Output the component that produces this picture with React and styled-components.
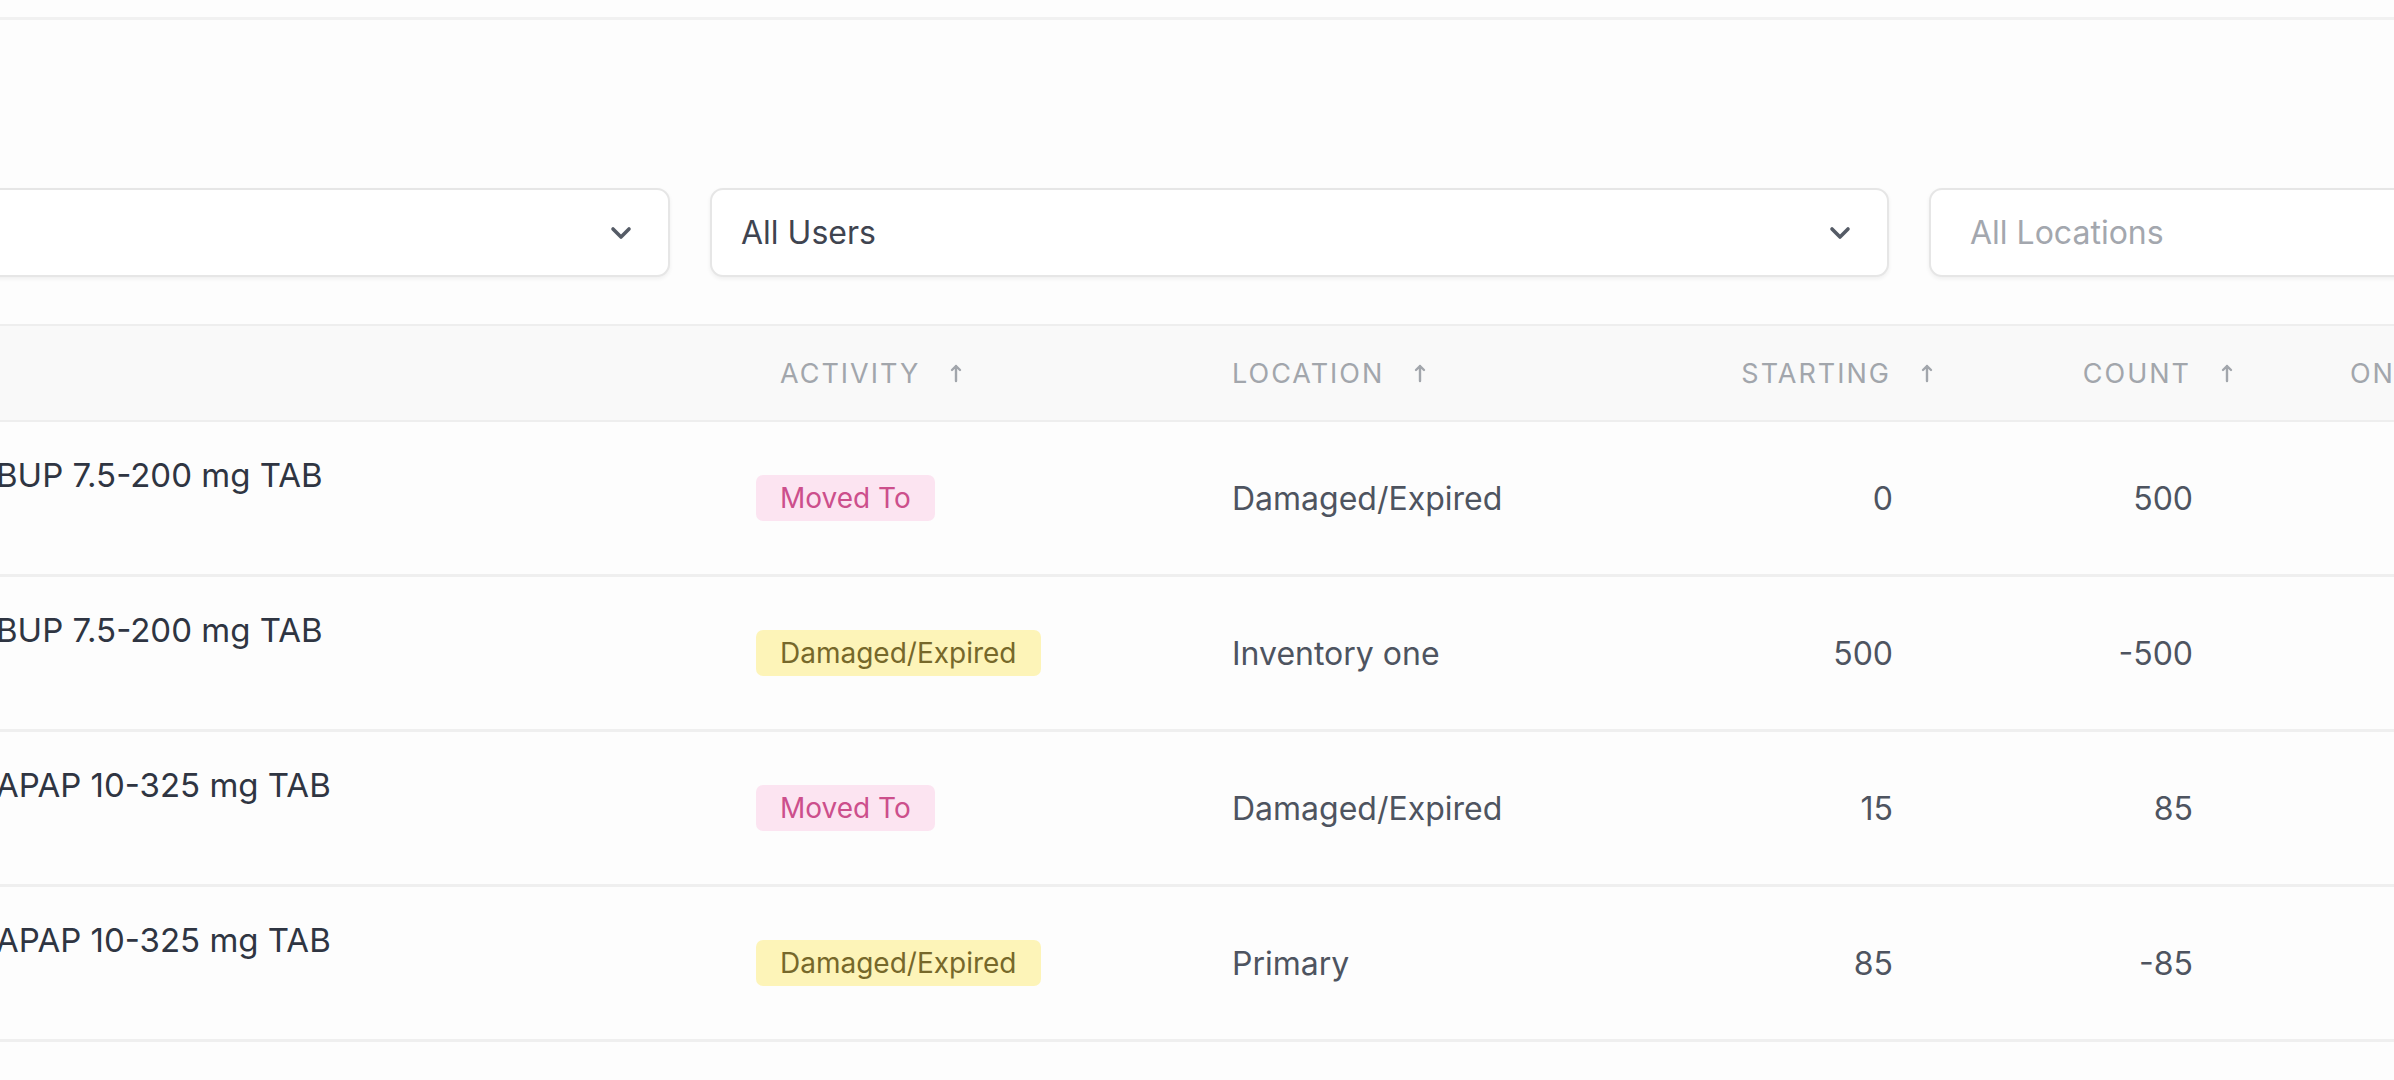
import React from "react";
import styled, { createGlobalStyle } from "styled-components";

const GlobalStyle = createGlobalStyle`
  html, body {
    margin: 0;
    padding: 0;
    background: #fdfdfd;
    overflow: hidden;
  }
  body {
    font-family: Inter, "Noto Sans", "Liberation Sans", sans-serif;
    color: #374151;
  }
`;

const Page = styled.div`
  width: 2394px;
  height: 1080px;
  overflow: hidden;
  background: #fdfdfd;
`;

const TopBar = styled.div`
  height: 17px;
  border-bottom: 3px solid #f1f1f1;
`;

const Content = styled.div`
  margin-left: -509px;
  padding-top: 168px;
  width: 3200px;
`;

const Filters = styled.div`
  display: grid;
  grid-template-columns: 1179px 1179px 1179px;
  gap: 40px;
  margin-bottom: 47px;
`;

const Select = styled.div`
  height: 89px;
  box-sizing: border-box;
  display: flex;
  align-items: center;
  justify-content: space-between;
  padding: 0 36px 0 ${(p) => p.$padLeft || 29}px;
  background: #fff;
  border: 2px solid #e6e6e6;
  border-radius: 13px;
  box-shadow: 0 2px 4px rgba(0, 0, 0, 0.06);
  font-size: 32px;
  color: ${(p) => (p.$placeholder ? "#a3a7ae" : "#3f4450")};
`;

const Chevron = () => (
  <svg width="22" height="14" viewBox="0 0 22 14" fill="none">
    <path d="M3 3l8 8 8-8" stroke="#555b66" strokeWidth="3.6" strokeLinecap="round" strokeLinejoin="round" />
  </svg>
);

const COLS = "483px 782px 452px 409px 300px 300px 300px";

const Table = styled.div`
  display: flex;
  flex-direction: column;
`;

const HeadRow = styled.div`
  display: grid;
  grid-template-columns: ${COLS};
  height: 98px;
  box-sizing: border-box;
  background: #f9f9f9;
  border-top: 2px solid #eeeeee;
  border-bottom: 2px solid #eeeeee;
`;

const HeadCell = styled.div`
  display: flex;
  align-items: center;
  justify-content: ${(p) => (p.$right ? "flex-end" : "flex-start")};
  padding: 0 24px;
  font-size: 27px;
  letter-spacing: 2px;
  text-transform: uppercase;
  color: #a2a6ac;
  white-space: nowrap;
`;

const Arrow = styled.span`
  display: inline-flex;
  margin-left: 30px;
  margin-right: ${(p) => (p.$right ? "-40px" : "0")};
`;

const SortArrow = ({ right }) => (
  <Arrow $right={right}>
    <svg width="12" height="20" viewBox="0 0 12 20" fill="none">
      <path d="M6 18V3M2 7l4-4 4 4" stroke="#a2a6ac" strokeWidth="2.4" strokeLinecap="round" strokeLinejoin="round" />
    </svg>
  </Arrow>
);

const Row = styled.div`
  display: grid;
  grid-template-columns: ${COLS};
  height: 155px;
  box-sizing: border-box;
  border-bottom: 3px solid #efefef;
`;

const Cell = styled.div`
  display: flex;
  align-items: center;
  justify-content: ${(p) => (p.$right ? "flex-end" : "flex-start")};
  padding: 0 24px;
  font-size: 32px;
  color: #4e5460;
  white-space: nowrap;
`;

const NameCell = styled.div`
  padding: 33px 24px 0 22px;
  font-size: 33px;
  line-height: 40px;
  color: #2f3542;
  white-space: nowrap;
`;

const Badge = styled.span`
  display: inline-flex;
  align-items: center;
  height: 46px;
  padding: 0 24px;
  margin-left: -24px;
  border-radius: 7px;
  font-size: 28px;
  background: ${(p) => (p.$tone === "pink" ? "#fce4f1" : "#fdf4b8")};
  color: ${(p) => (p.$tone === "pink" ? "#cc4f8c" : "#76682a")};
`;

const rows = [
  { date: "01/12/2024", name: "BUP 7.5-200 mg TAB", activity: "Moved To", tone: "pink", location: "Damaged/Expired", starting: "0", count: "500", onHand: "500" },
  { date: "01/12/2024", name: "BUP 7.5-200 mg TAB", activity: "Damaged/Expired", tone: "yellow", location: "Inventory one", starting: "500", count: "-500", onHand: "0" },
  { date: "01/12/2024", name: "APAP 10-325 mg TAB", activity: "Moved To", tone: "pink", location: "Damaged/Expired", starting: "15", count: "85", onHand: "100" },
  { date: "01/12/2024", name: "APAP 10-325 mg TAB", activity: "Damaged/Expired", tone: "yellow", location: "Primary", starting: "85", count: "-85", onHand: "0" },
  { date: "01/11/2024", name: "BUP 7.5-200 mg TAB", activity: "Moved To", tone: "pink", location: "Damaged/Expired", starting: "0", count: "20", onHand: "20" },
];

const App = () => {
  return (
    <Page>
      <GlobalStyle />
      <TopBar />
      <Content>
        <Filters>
          <Select>
            <span>All Products</span>
            <Chevron />
          </Select>
          <Select>
            <span>All Users</span>
            <Chevron />
          </Select>
          <Select $padLeft={39} $placeholder>
            <span>All Locations</span>
          </Select>
        </Filters>

        <Table>
          <HeadRow>
            <HeadCell>Date</HeadCell>
            <HeadCell />
            <HeadCell>
              Activity
              <SortArrow />
            </HeadCell>
            <HeadCell>
              Location
              <SortArrow />
            </HeadCell>
            <HeadCell $right>
              Starting
              <SortArrow right />
            </HeadCell>
            <HeadCell $right>
              Count
              <SortArrow right />
            </HeadCell>
            <HeadCell $right>
              On Hand
              <SortArrow right />
            </HeadCell>
          </HeadRow>
          {rows.map((r, i) => (
            <Row key={i}>
              <Cell>{r.date}</Cell>
              <NameCell>{r.name}</NameCell>
              <Cell>
                <Badge $tone={r.tone}>{r.activity}</Badge>
              </Cell>
              <Cell>{r.location}</Cell>
              <Cell $right>{r.starting}</Cell>
              <Cell $right>{r.count}</Cell>
              <Cell $right>{r.onHand}</Cell>
            </Row>
          ))}
        </Table>
      </Content>
    </Page>
  );
};

export default App;
